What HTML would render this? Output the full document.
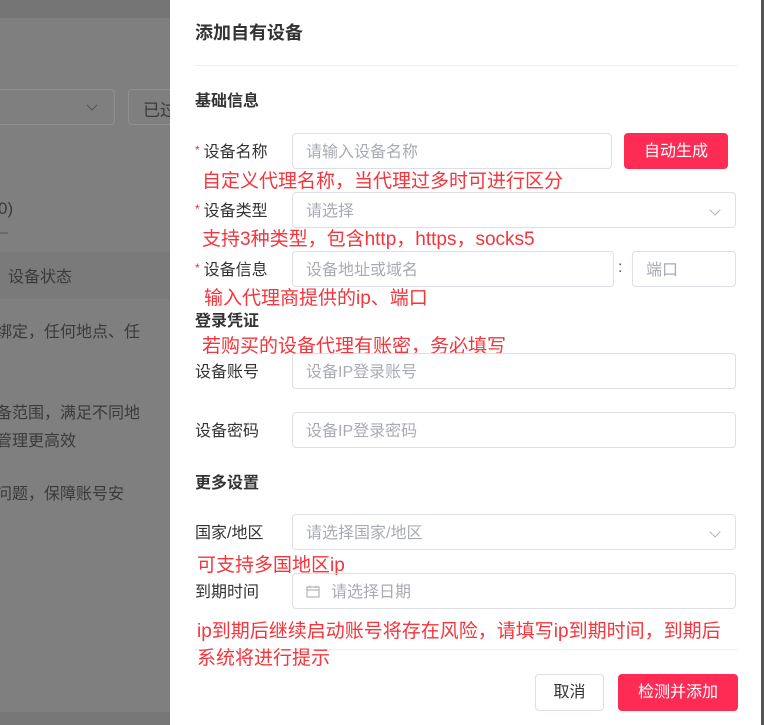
<!DOCTYPE html>
<html><head><meta charset="utf-8"><style>
*{margin:0;padding:0;box-sizing:border-box}
body{width:764px;height:725px;overflow:hidden;background:#7f7f7f;position:relative;font-family:"Liberation Sans","Noto Sans CJK SC",sans-serif;font-size:16px}
.a{position:absolute;white-space:nowrap}
.bg{color:#3a3a3a}
.modal{position:absolute;left:170px;top:0;width:591px;height:725px;background:#fff}
.inp{position:absolute;border:1px solid #dcdfe6;border-radius:4px;height:36px;color:#a8abb2;font-size:16px;line-height:37px;padding-left:13px}
.lbl{position:absolute;color:#333;font-size:16px;margin-top:-3px}
.star{color:#f5223c;font-size:12px;position:relative;top:-3px;margin-right:4px}
.red{position:absolute;color:#f5343b;font-size:19px;white-space:nowrap}
.h{position:absolute;font-weight:bold;color:#333;font-size:16px;margin-top:-2px}
.chev{position:absolute;right:16px;top:13px;width:8px;height:8px;border-right:1.3px solid #b0b3b8;border-bottom:1.3px solid #b0b3b8;transform:rotate(45deg)}
</style></head><body>
<div class="a" style="left:0;top:0;width:170px;height:18px;background:#757575"></div>
<div class="a" style="left:-10px;top:89px;width:125px;height:36px;border:1px solid #8f8f8f;border-radius:4px"></div>
<div class="a" style="left:88px;top:101px;width:8px;height:8px;border-right:1.3px solid #555;border-bottom:1.3px solid #555;transform:rotate(45deg)"></div>
<div class="a" style="left:128px;top:89px;width:60px;height:36px;border:1px solid #8f8f8f;border-radius:4px"></div>
<div class="a bg" style="left:143px;top:96px;font-size:17px">已过</div>
<div class="a bg" style="left:-2px;top:199px;font-size:17px">0)</div>
<div class="a" style="left:0;top:232px;width:8px;height:2px;background:#6a6a6a"></div>
<div class="a" style="left:0;top:252px;width:170px;height:47px;background:#7a7a7a"></div>
<div class="a bg" style="left:8px;top:263px;font-size:16px">设备状态</div>
<div class="a bg" style="left:-4px;top:318px;font-size:16px">绑定，任何地点、任</div>
<div class="a bg" style="left:-4px;top:399px;font-size:16px">备范围，满足不同地</div>
<div class="a bg" style="left:-4px;top:427px;font-size:16px">管理更高效</div>
<div class="a bg" style="left:-4px;top:480px;font-size:16px">问题，保障账号安</div>
<div class="a" style="left:0;top:712px;width:170px;height:13px;background:#777"></div>
<div class="a" style="left:761px;top:0;width:3px;height:725px;background:#555"></div>

<div class="modal">
<div class="a" style="left:25px;top:19px;font-size:18px;font-weight:bold;color:#333">添加自有设备</div>
<div class="a" style="left:25px;top:65px;width:542px;height:1px;background:#eee"></div>
<div class="h" style="left:25px;top:89px">基础信息</div>

<div class="lbl" style="left:25px;top:141px"><span class="star">*</span>设备名称</div>
<div class="inp" style="left:122px;top:133px;width:320px">请输入设备名称</div>
<div class="a" style="left:454px;top:133px;width:104px;height:36px;background:#fe2c55;border-radius:4px;color:#fff;font-size:16px;text-align:center;line-height:37px">自动生成</div>
<div class="red" style="left:32px;top:166px">自定义代理名称，当代理过多时可进行区分</div>

<div class="lbl" style="left:25px;top:200px"><span class="star">*</span>设备类型</div>
<div class="inp" style="left:122px;top:192px;width:444px">请选择<span class="chev"></span></div>
<div class="red" style="left:32px;top:224px">支持3种类型，包含http，https，socks5</div>

<div class="lbl" style="left:25px;top:259px"><span class="star">*</span>设备信息</div>
<div class="inp" style="left:122px;top:251px;width:322px">设备地址或域名</div>
<div class="a" style="left:448px;top:259px;color:#555">:</div>
<div class="inp" style="left:462px;top:251px;width:104px">端口</div>
<div class="red" style="left:34px;top:283px">输入代理商提供的ip、端口</div>

<div class="h" style="left:25px;top:309px">登录凭证</div>
<div class="red" style="left:32px;top:331px">若购买的设备代理有账密，务必填写</div>

<div class="lbl" style="left:25px;top:361px">设备账号</div>
<div class="inp" style="left:122px;top:353px;width:444px">设备IP登录账号</div>
<div class="lbl" style="left:25px;top:420px">设备密码</div>
<div class="inp" style="left:122px;top:412px;width:444px">设备IP登录密码</div>

<div class="h" style="left:25px;top:471px">更多设置</div>

<div class="lbl" style="left:25px;top:522px">国家/地区</div>
<div class="inp" style="left:122px;top:514px;width:444px">请选择国家/地区<span class="chev"></span></div>
<div class="red" style="left:27px;top:550px">可支持多国地区ip</div>

<div class="lbl" style="left:25px;top:581px">到期时间</div>
<div class="inp" style="left:122px;top:573px;width:444px;padding-left:38px">请选择日期
<svg style="position:absolute;left:13px;top:11px" width="14" height="13" viewBox="0 0 14 13"><rect x="1" y="2" width="12" height="10" fill="none" stroke="#b0b3b8" stroke-width="1.2"/><line x1="1" y1="5" x2="13" y2="5" stroke="#b0b3b8" stroke-width="1.2"/><line x1="4" y1="0.5" x2="4" y2="3" stroke="#b0b3b8"/><line x1="10" y1="0.5" x2="10" y2="3" stroke="#b0b3b8"/></svg></div>
<div class="red" style="left:27px;top:616px">ip到期后继续启动账号将存在风险，请填写ip到期时间，到期后</div>
<div class="a" style="left:25px;top:649px;width:542px;height:1px;background:#eee"></div>
<div class="red" style="left:27px;top:643px">系统将进行提示</div>

<div class="a" style="left:365px;top:674px;width:69px;height:37px;border:1px solid #dcdfe6;border-radius:4px;text-align:center;line-height:36px;color:#333;font-size:16px">取消</div>
<div class="a" style="left:448px;top:674px;width:120px;height:37px;background:#fe2c55;border-radius:4px;text-align:center;line-height:38px;color:#fff;font-size:16px">检测并添加</div>
</div>
</body></html>
